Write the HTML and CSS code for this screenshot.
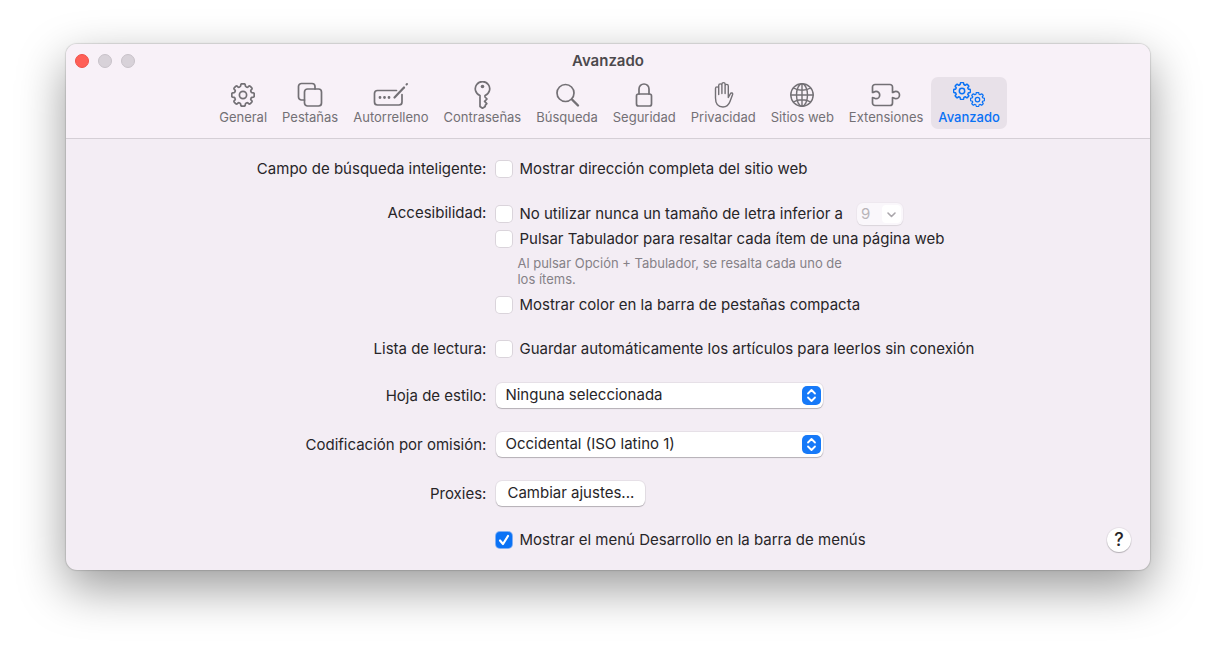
FILE: index.html
```html
<!DOCTYPE html>
<html lang="es">
<head>
    <meta charset="UTF-8">
    <meta name="viewport" content="width=device-width, initial-scale=1.0">
    <title>Avanzado</title>
    <link rel="stylesheet" href="styles.css">
</head>
<body>
    <svg class="sprite" aria-hidden="true">
        <symbol id="gear" viewBox="-12 -12 24 24">
            <path d="M10.300-2.200Q11.200-2 11.200-1.200V1.200Q11.200 2 10.300 2.200L8.900 2.400Q8.300 2.600 8 3.400 7.500 4.300 7.900 4.900L8.800 5.700Q9.300 6.400 8.800 7.100L7.100 8.800Q6.400 9.300 5.700 8.800L4.900 7.900Q4.300 7.500 3.400 8 2.600 8.300 2.400 8.900L2.200 10.300Q2 11.200 1.200 11.200H-1.200Q-2 11.200-2.200 10.300L-2.400 8.900Q-2.600 8.300-3.400 8-4.300 7.500-4.900 7.900L-5.700 8.800Q-6.400 9.300-7.100 8.800L-8.800 7.100Q-9.300 6.400-8.800 5.700L-7.900 4.900Q-7.500 4.300-8 3.400-8.300 2.600-8.900 2.400L-10.300 2.200Q-11.200 2-11.200 1.200V-1.200Q-11.200-2-10.300-2.200L-8.900-2.400Q-8.300-2.600-8-3.400-7.500-4.300-7.900-4.900L-8.800-5.700Q-9.300-6.400-8.800-7.100L-7.100-8.800Q-6.400-9.300-5.700-8.800L-4.900-7.900Q-4.300-7.500-3.400-8-2.600-8.300-2.400-8.900L-2.200-10.300Q-2-11.200-1.200-11.200H1.200Q2-11.200 2.200-10.300L2.400-8.900Q2.600-8.300 3.400-8 4.300-7.500 4.900-7.900L5.700-8.800Q6.400-9.300 7.100-8.800L8.800-7.100Q9.300-6.400 8.800-5.700L7.900-4.900Q7.500-4.300 8-3.400 8.300-2.600 8.900-2.400Z"/>
            <circle r="3.600"/>
        </symbol>
    </svg>

    <main class="window">
        <header class="header">
            <div class="titlebar">
                <div class="lights">
                    <button class="light close" aria-label="Cerrar"></button>
                    <button class="light" aria-label="Minimizar" disabled></button>
                    <button class="light" aria-label="Ampliar" disabled></button>
                </div>
                <h1 class="title">Avanzado</h1>
            </div>

            <nav class="toolbar">
                <button class="tab">
                    <svg class="icon" width="26" height="28" viewBox="0 0 26 28"><use href="#gear" x="1" y="2" width="24" height="24"/></svg>
                    General
                </button>
                <button class="tab">
                    <svg class="icon" width="26" height="28" viewBox="0 0 26 28">
                        <path d="M7.500 19H4.500a3 3 0 0 1-3-3V5.500a3 3 0 0 1 3-3H15a3 3 0 0 1 3 3V8"/>
                        <rect x="7.500" y="8" width="17" height="17" rx="3"/>
                    </svg>
                    Pestañas
                </button>
                <button class="tab">
                    <svg class="icon" width="36" height="28" viewBox="0 0 36 28">
                        <path d="M23.500 9.500H4.500a3 3 0 0 0-3 3V21a3 3 0 0 0 3 3H26a3 3 0 0 0 3-3V13.500"/>
                        <path d="M21.500 16.500 31 6.500" stroke-width="2.200"/>
                        <path d="M33.500 3.500 34 3" stroke-width="2"/>
                        <path d="M7 16.500h.01M11.500 16.500h.01M16 16.500h.01" stroke-width="2.800"/>
                    </svg>
                    Autorrelleno
                </button>
                <button class="tab">
                    <svg class="icon" width="26" height="28" viewBox="0 0 26 28">
                        <path d="M11 14.500A7.200 7.200 0 1 1 16 14.500V16l2 2-2.400 2.400 2.200 2.200-1.600 1.800V25.500L13.500 27.300 11 25.500Z"/>
                        <circle class="solid" cx="13.500" cy="5.500" r="1.800"/>
                    </svg>
                    Contraseñas
                </button>
                <button class="tab">
                    <svg class="icon" width="26" height="28" viewBox="0 0 26 28">
                        <circle cx="11.500" cy="12" r="8.500"/>
                        <path d="M18 18.500 24 24.500" stroke-width="2.400"/>
                    </svg>
                    Búsqueda
                </button>
                <button class="tab">
                    <svg class="icon" width="26" height="28" viewBox="0 0 26 28">
                        <rect x="5.500" y="13" width="15" height="12" rx="2"/>
                        <path d="M8 13V8a5 5 0 0 1 10 0v5"/>
                    </svg>
                    Seguridad
                </button>
                <button class="tab">
                    <svg class="icon thin" width="26" height="28" viewBox="0 0 26 28">
                        <path d="M5.500 17V7.500a1.600 1.600 0 0 1 3.200 0V13.500M8.700 9V4.500a1.600 1.600 0 0 1 3.200 0V12.500M11.900 5V3.200a1.600 1.600 0 0 1 3.200 0V12.500M15.100 5a1.600 1.600 0 0 1 3.200 0V16.500L20.300 12.800C21 11.300 23.200 11.900 22.600 13.500L20 20.500C18.500 24.500 16.500 26 13 26 8 26 5.500 23 5.500 17"/>
                    </svg>
                    Privacidad
                </button>
                <button class="tab">
                    <svg class="icon thin" width="26" height="28" viewBox="0 0 26 28">
                        <circle cx="13" cy="14" r="11.200"/>
                        <ellipse cx="13" cy="14" rx="5.500" ry="11.200"/>
                        <path d="M13 2.800V25.200M1.800 14H24.200M4.500 7C9 10 17 10 21.500 7M4.500 21C9 18 17 18 21.500 21"/>
                    </svg>
                    Sitios web
                </button>
                <button class="tab">
                    <svg class="icon" width="30" height="28" viewBox="0 0 30 28">
                        <path d="M1.500 11.500V6a2.500 2.500 0 0 1 2.500-2.500H19A2.500 2.500 0 0 1 21.500 6V11.500C22.800 11.500 23 10.300 24.800 10.300a3.700 3.700 0 0 1 0 7.400C23 17.700 22.800 16.500 21.500 16.500V22a2.500 2.500 0 0 1-2.500 2.500H4A2.500 2.500 0 0 1 1.500 22V16.500C3 16.500 3.200 17.700 5 17.700a3.700 3.700 0 0 0 0-7.400C3.200 10.300 3 11.500 1.500 11.500Z"/>
                    </svg>
                    Extensiones
                </button>
                <button class="tab active" aria-current="page">
                    <svg class="icon gears" width="34" height="28" viewBox="0 0 34 28">
                        <use href="#gear" x="1" y="1" width="18" height="18"/>
                        <use href="#gear" x="18" y="11" width="15" height="15"/>
                    </svg>
                    Avanzado
                </button>
            </nav>
        </header>

        <form class="settings">
            <div class="row">
                <span class="label">Campo de búsqueda inteligente:</span>
                <label class="check"><input type="checkbox">Mostrar dirección completa del sitio web</label>
            </div>

            <div class="row group">
                <span class="label">Accesibilidad:</span>
                <div class="field">
                    <div class="font-size">
                        <label class="check"><input type="checkbox">No utilizar nunca un tamaño de letra inferior a</label>
                        <select class="size-select" aria-label="Tamaño de letra" disabled>
                            <option>9</option>
                        </select>
                    </div>
                    <label class="check tab-check"><input type="checkbox" aria-describedby="tabHint">Pulsar Tabulador para resaltar cada ítem de una página web</label>
                    <p class="hint" id="tabHint">Al pulsar Opción + Tabulador, se resalta cada uno de los ítems.</p>
                    <label class="check"><input type="checkbox">Mostrar color en la barra de pestañas compacta</label>
                </div>
            </div>

            <div class="row">
                <span class="label">Lista de lectura:</span>
                <label class="check"><input type="checkbox">Guardar automáticamente los artículos para leerlos sin conexión</label>
            </div>

            <div class="row">
                <label class="label" for="stylesheet">Hoja de estilo:</label>
                <select class="popup" id="stylesheet">
                    <option>Ninguna seleccionada</option>
                </select>
            </div>

            <div class="row">
                <label class="label" for="encoding">Codificación por omisión:</label>
                <select class="popup" id="encoding">
                    <option>Occidental (ISO latino 1)</option>
                </select>
            </div>

            <div class="row">
                <label class="label" for="proxies">Proxies:</label>
                <button class="push" id="proxies" type="button">Cambiar ajustes...</button>
            </div>

            <div class="row">
                <span></span>
                <div class="footer">
                    <label class="check"><input type="checkbox" checked>Mostrar el menú Desarrollo en la barra de menús</label>
                    <button class="help" type="button" aria-label="Ayuda">?</button>
                </div>
            </div>
        </form>
    </main>
</body>
</html>
```

FILE: styles.css
```css
:root {
    --header-bg: #f8f1f8;
    --body-bg: #f3edf4;
    --text: #272528;
    --toolbar-text: #737075;
    --hint: #858187;
    --blue: #0a72f5;
    --control-shadow: 0 0 0 1px rgba(0, 0, 0, 0.05), 0 1px 1px rgba(0, 0, 0, 0.22);
}

* {
    box-sizing: border-box;
}

body {
    min-height: 100vh;
    margin: 0;
    padding: 44px 66px;
    background: #fff;
    color: var(--text);
    font-family: Inter, "Liberation Sans", sans-serif;
    font-size: 15px;
    line-height: 20px;
}

button,
select,
input {
    margin: 0;
    border: none;
    font: inherit;
    color: inherit;
}

.sprite {
    display: none;
}

.window {
    border-radius: 11px;
    background: var(--body-bg);
    box-shadow: 0 0 1px 1px rgba(0, 0, 0, 0.12), 0 18px 48px rgba(0, 0, 0, 0.4);
}

/* Title bar and toolbar */
.header {
    border-bottom: 1px solid #d5cfd6;
    border-radius: 11px 11px 0 0;
    background: var(--header-bg);
}

.titlebar {
    display: grid;
    grid-template-columns: 1fr auto 1fr;
    align-items: center;
    height: 33px;
    padding: 0 9px;
}

.lights {
    display: flex;
    gap: 9px;
}

.light {
    width: 14px;
    height: 14px;
    padding: 0;
    border: 1px solid #c8c2c9;
    border-radius: 50%;
    background: #d8d2d9;
}

.light.close {
    border-color: #ee5149;
    background: #ff5f57;
}

.title {
    margin: 0;
    color: #4c494d;
    font-size: 15px;
    font-weight: 600;
}

.toolbar {
    display: flex;
    justify-content: center;
    gap: 1px;
    padding: 0 0 9px 3px;
}

.tab {
    display: flex;
    flex-direction: column;
    align-items: center;
    height: 52px;
    padding: 4px 7px;
    border-radius: 7px;
    background: none;
    color: var(--toolbar-text);
    font-size: 13px;
    line-height: 16px;
}

.tab.active {
    background: #e8e1e9;
    color: var(--blue);
    font-weight: 500;
}

.icon {
    fill: none;
    stroke: currentColor;
    stroke-width: 1.7;
    stroke-linecap: round;
    stroke-linejoin: round;
}

.icon.thin {
    stroke-width: 1.4;
}

.icon.gears {
    stroke-width: 2;
}

.icon .solid {
    fill: currentColor;
    stroke: none;
}

/* Settings form */
.settings {
    display: grid;
    gap: 24px;
    padding: 20px 19px;
}

.row {
    display: grid;
    grid-template-columns: 31fr 49fr;
    column-gap: 10px;
    justify-items: start;
    align-items: center;
}

.row.group {
    align-items: start;
}

.label {
    justify-self: end;
}

.check {
    display: flex;
    align-items: center;
    gap: 7px;
}

.check input {
    appearance: none;
    flex: none;
    width: 16px;
    height: 16px;
    border-radius: 4px;
    background: #fff;
    box-shadow: 0 0 0 1px rgba(0, 0, 0, 0.1);
}

.check input:checked {
    background: var(--blue) url("data:image/svg+xml,%3Csvg xmlns='http://www.w3.org/2000/svg' viewBox='0 0 16 16'%3E%3Cpath d='M4 8.500 7 12 12 4' fill='none' stroke='white' stroke-width='2.200' stroke-linecap='round' stroke-linejoin='round'/%3E%3C/svg%3E");
    box-shadow: 0 0 0 1px rgba(10, 114, 245, 0.5);
}

.font-size {
    display: flex;
    align-items: center;
    gap: 14px;
    height: 22px;
}

.size-select {
    appearance: none;
    width: 46px;
    height: 22px;
    padding: 0 4px;
    border-radius: 6px;
    background: #faf7fb url("data:image/svg+xml,%3Csvg xmlns='http://www.w3.org/2000/svg' width='19' height='18'%3E%3Crect width='19' height='18' rx='4' fill='white'/%3E%3Cpath d='M6 8l3.500 3.500L13 8' fill='none' stroke='%23aaa6ab' stroke-width='1.600' stroke-linecap='round' stroke-linejoin='round'/%3E%3C/svg%3E") no-repeat right 2px center;
    box-shadow: 0 0 0 1px rgba(0, 0, 0, 0.02), 0 1px 1px rgba(0, 0, 0, 0.08);
    color: #b8b4b9;
    opacity: 1;
}

.tab-check {
    margin-top: 4px;
}

.hint {
    max-width: 350px;
    margin: 6px 0 8px;
    padding-left: 21px;
    color: var(--hint);
    font-size: 13px;
    line-height: 16px;
}

.popup {
    appearance: none;
    width: 100%;
    max-width: 327px;
    height: 25px;
    padding: 0 30px 2px 9px;
    border-radius: 6px;
    background: #fff url("data:image/svg+xml,%3Csvg xmlns='http://www.w3.org/2000/svg' width='19' height='19'%3E%3Crect width='19' height='19' rx='5' fill='%231679f8'/%3E%3Cpath d='M6 7.500 9.500 4 13 7.500M6 11.500 9.500 15 13 11.500' fill='none' stroke='white' stroke-width='1.800' stroke-linecap='round' stroke-linejoin='round'/%3E%3C/svg%3E") no-repeat right 2px center;
    box-shadow: var(--control-shadow);
}

.push {
    height: 25px;
    padding: 0 11px 2px;
    border-radius: 6px;
    background: #fff;
    box-shadow: var(--control-shadow);
}

.footer {
    display: flex;
    justify-self: stretch;
    justify-content: space-between;
    align-items: center;
    height: 20px;
}

.help {
    width: 24px;
    height: 24px;
    padding: 0;
    border-radius: 50%;
    background: #fff;
    box-shadow: var(--control-shadow);
    font-size: 18px;
    font-weight: 500;
}
```
